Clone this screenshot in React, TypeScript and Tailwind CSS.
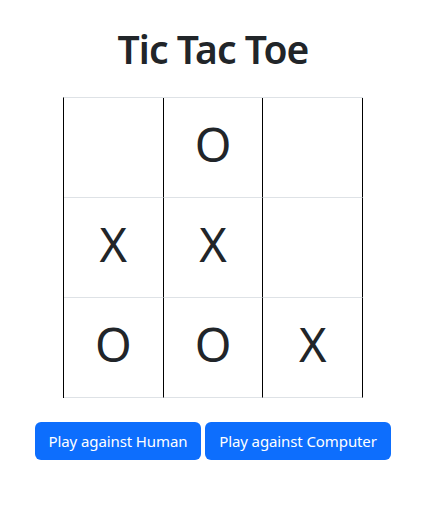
import React, { useState } from 'react';

type Cell = 'X' | 'O' | null;

const initialBoard: Cell[] = [null, 'O', null, 'X', 'X', null, 'O', 'O', 'X'];

const App: React.FC = () => {
  const [board] = useState<Cell[]>(initialBoard);

  return (
    <div className="min-h-screen bg-white font-['Noto_Sans','Open_Sans',sans-serif] text-[#212529]">
      <div className="flex flex-col items-center pl-[2px] pt-[26px]">
        <h1 className="text-[39px] font-semibold leading-[1.2] tracking-[-0.9px]">Tic Tac Toe</h1>

        {/* Board */}
        <div className="mt-[24px] grid w-[300px] grid-cols-3 border-l border-t border-l-black border-t-[#dee2e6]">
          {board.map((cell, i) => (
            <div
              key={i}
              className="flex h-[100px] items-center justify-center border-b border-r border-b-[#dee2e6] border-r-black pb-[6px] text-[47px] leading-none"
            >
              {cell}
            </div>
          ))}
        </div>

        {/* Controls */}
        <div className="mt-[24px] flex gap-1">
          <button className="h-[38px] w-[166px] rounded-md bg-[#0d6efd] text-[15px] tracking-[-0.1px] text-white">
            Play against Human
          </button>
          <button className="h-[38px] w-[186px] rounded-md bg-[#0d6efd] text-[15px] tracking-[-0.1px] text-white">
            Play against Computer
          </button>
        </div>
      </div>
    </div>
  );
};

export default App;
